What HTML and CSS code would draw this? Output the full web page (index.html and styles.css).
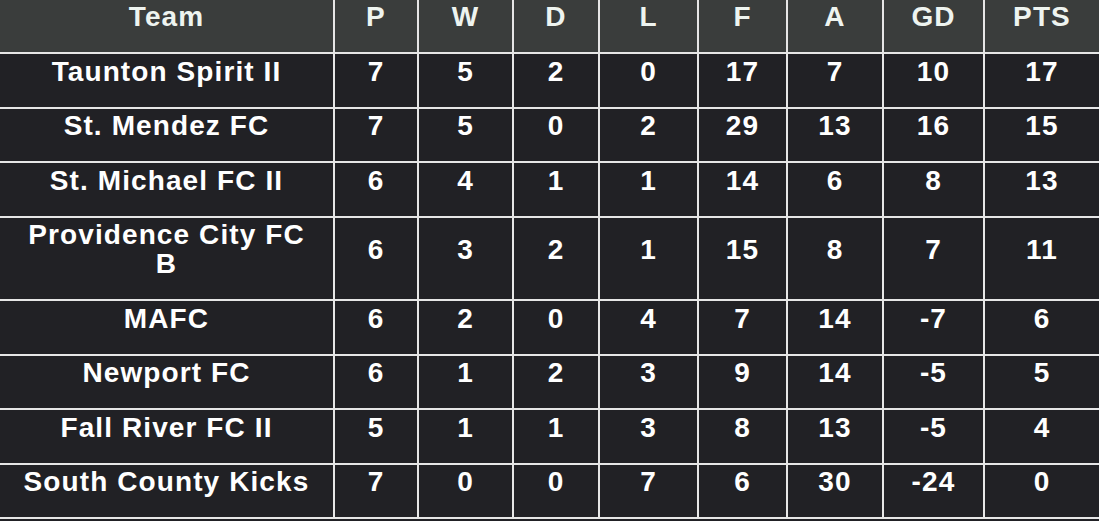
FILE: index.html
```html
<!DOCTYPE html>
<html lang="en">
<head>
<meta charset="utf-8">
<title>Standings</title>
<link rel="stylesheet" href="styles.css">
</head>
<body>
<table class="standings">
  <colgroup>
    <col class="c-team"><col class="c-p"><col class="c-w"><col class="c-d"><col class="c-l"><col class="c-f"><col class="c-a"><col class="c-gd"><col class="c-pts">
  </colgroup>
  <thead>
    <tr><th class="team">Team</th><th>P</th><th>W</th><th>D</th><th>L</th><th>F</th><th>A</th><th>GD</th><th>PTS</th></tr>
  </thead>
  <tbody>
    <tr><td class="team">Taunton Spirit II</td><td>7</td><td>5</td><td>2</td><td>0</td><td>17</td><td>7</td><td>10</td><td>17</td></tr>
    <tr><td class="team">St. Mendez FC</td><td>7</td><td>5</td><td>0</td><td>2</td><td>29</td><td>13</td><td>16</td><td>15</td></tr>
    <tr><td class="team">St. Michael FC II</td><td>6</td><td>4</td><td>1</td><td>1</td><td>14</td><td>6</td><td>8</td><td>13</td></tr>
    <tr><td class="team">Providence City FC B</td><td>6</td><td>3</td><td>2</td><td>1</td><td>15</td><td>8</td><td>7</td><td>11</td></tr>
    <tr><td class="team">MAFC</td><td>6</td><td>2</td><td>0</td><td>4</td><td>7</td><td>14</td><td>-7</td><td>6</td></tr>
    <tr><td class="team">Newport FC</td><td>6</td><td>1</td><td>2</td><td>3</td><td>9</td><td>14</td><td>-5</td><td>5</td></tr>
    <tr><td class="team">Fall River FC II</td><td>5</td><td>1</td><td>1</td><td>3</td><td>8</td><td>13</td><td>-5</td><td>4</td></tr>
    <tr><td class="team">South County Kicks</td><td>7</td><td>0</td><td>0</td><td>7</td><td>6</td><td>30</td><td>-24</td><td>0</td></tr>
  </tbody>
</table>
</body>
</html>
```
FILE: styles.css
```css
html, body {
  margin: 0;
  padding: 0;
  background: #212125;
}
body {
  overflow: hidden;
}
.standings {
  border-collapse: collapse;
  table-layout: fixed;
  width: 1100px;
  margin-top: -2px;
  font-family: "Liberation Sans", Arial, Helvetica, sans-serif;
  font-weight: bold;
  font-size: 28px;
  line-height: 29px;
  letter-spacing: 1.1px;
  color: #ffffff;
}
.c-team { width: 334px; }
.c-p { width: 84px; }
.c-w { width: 95px; }
.c-d { width: 86px; }
.c-l { width: 99px; }
.c-f { width: 89px; }
.c-a { width: 96px; }
.c-gd { width: 101px; }
.c-pts { width: 116px; }
.standings th,
.standings td {
  border: 2px solid #e6e6e6;
  text-align: center;
  vertical-align: middle;
  padding: 2.5px 8px 21px;
}
.standings .team {
  padding-left: 18px;
  padding-right: 18px;
}
.standings th {
  background: #3a3d3c;
  color: #eef4f0;
  font-weight: bold;
  border-top: 0;
  padding-top: 4px;
}
.standings td {
  background: #212125;
}
.standings th:first-child,
.standings td:first-child {
  border-left: 0;
}
```
